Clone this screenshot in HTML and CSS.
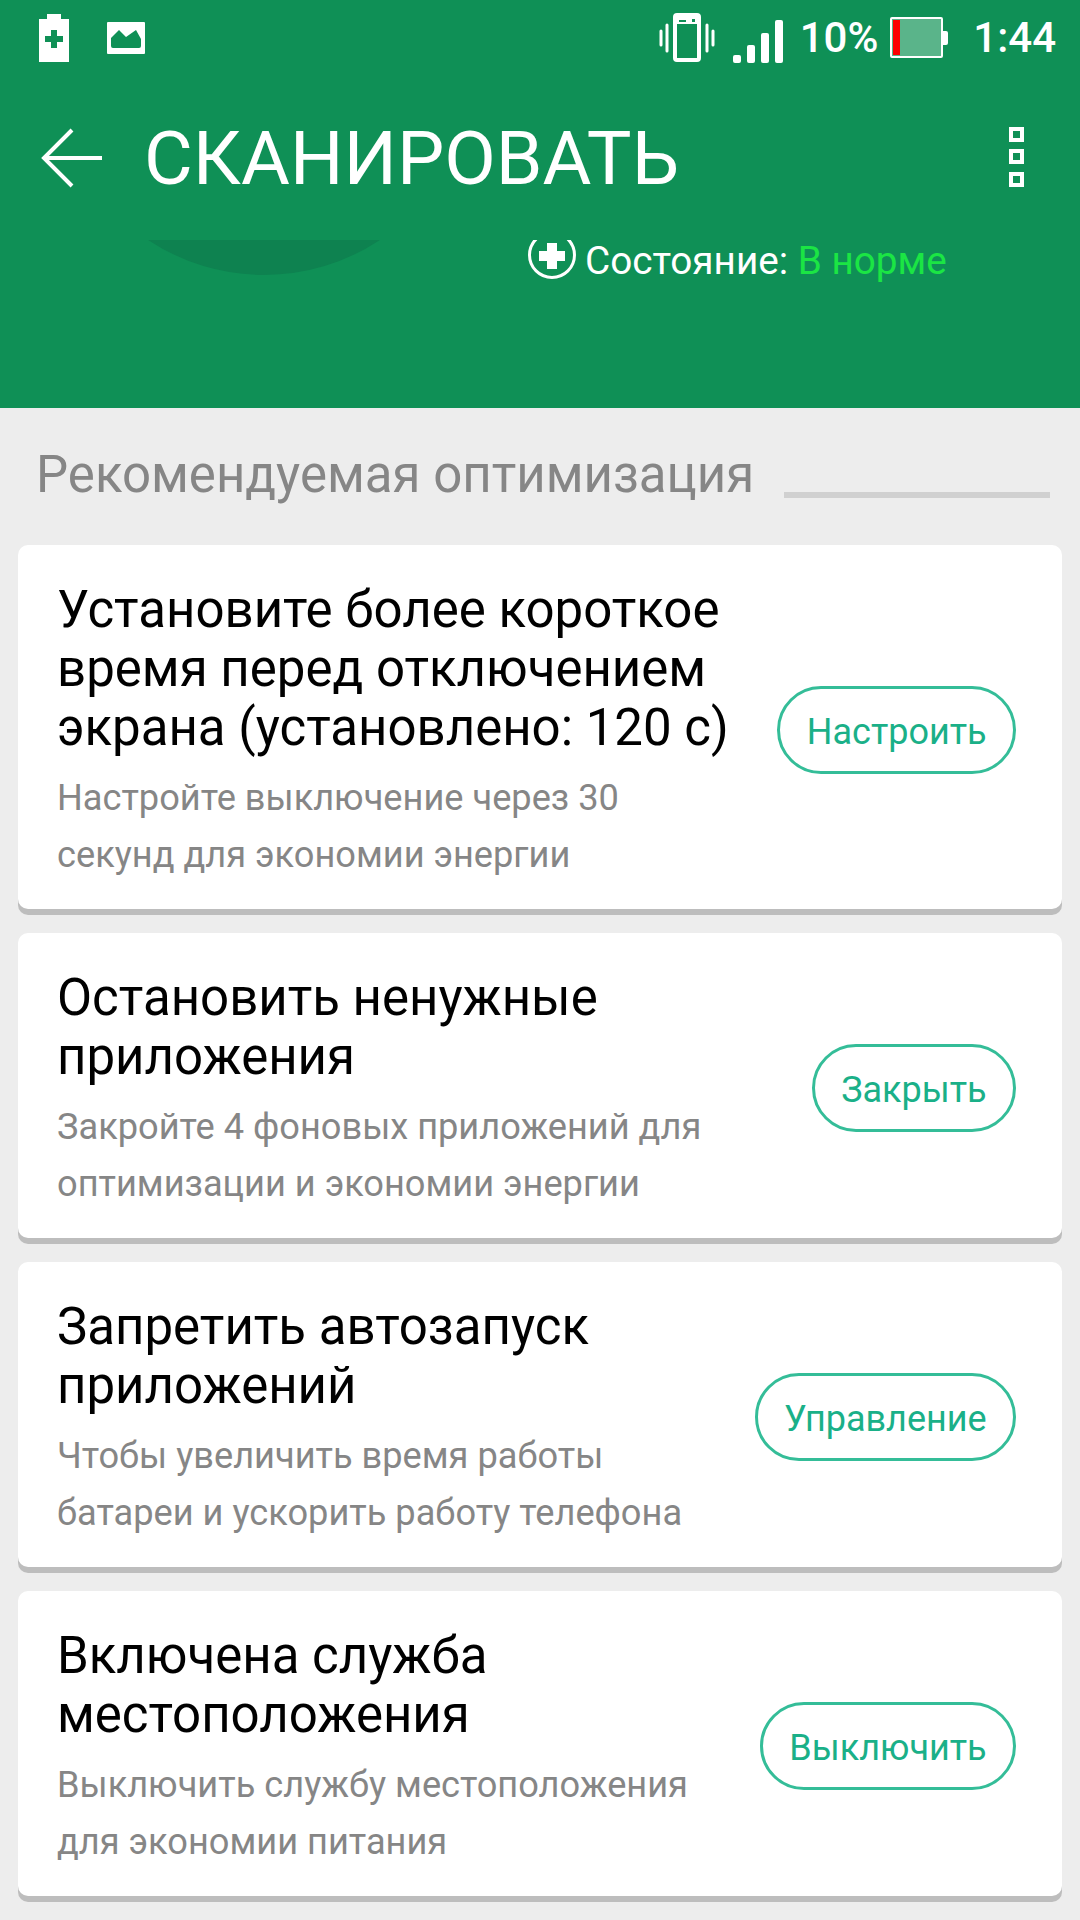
FILE: index.html
```html
<!DOCTYPE html>
<html lang="en">

<head>
    <meta charset="UTF-8">
    <meta name="viewport" content="width=device-width, initial-scale=1.0">
    <title>Сканировать</title>
    <link rel="stylesheet" href="styles.css">
</head>

<body>
    <header class="top">
        <div class="status">
            <div class="status-left">
                <svg class="ic-charge" width="30" height="48" viewBox="0 0 30 48">
                    <path fill="#fff" d="M8 0h14v5h8v43H0V5h8z" />
                    <path fill="#0f9056" d="M12 16h6v6h6v6h-6v6h-6v-6H6v-6h6z" />
                </svg>
                <svg class="ic-image" width="38" height="32" viewBox="0 0 38 32">
                    <rect width="38" height="32" rx="1" fill="#fff" />
                    <path fill="#0f9056" d="M4 16l8-8 7 7 10-7 5 9v7q0 2-2 2H6q-2 0-2-2z" />
                </svg>
            </div>
            <div class="status-right">
                <svg class="ic-vibrate" width="56" height="50" viewBox="0 0 56 50">
                    <g fill="none" stroke="#fff" stroke-width="3" stroke-linecap="round">
                        <rect x="16" y="2" width="24" height="45" rx="2" stroke-width="4" />
                        <path d="M2 18v14M8 12v26M48 12v26M54 18v14" />
                    </g>
                    <path fill="#fff" d="M18 4h20v7H18z" />
                    <path fill="#0f9056" d="M20 7h7v2h-7zM33 6h3v3h-3z" />
                </svg>
                <svg class="ic-signal" width="50" height="43" viewBox="0 0 50 43">
                    <g fill="#fff">
                        <rect x="0" y="35" width="8" height="8" rx="2" />
                        <rect x="14" y="25" width="8" height="18" rx="2" />
                        <rect x="28" y="13" width="8" height="30" rx="2" />
                        <rect x="42" y="0" width="8" height="43" rx="2" />
                    </g>
                </svg>
                <span class="pct">10%</span>
                <svg class="ic-batt" width="58" height="41" viewBox="0 0 58 41">
                    <rect x="1" y="1" width="51" height="39" rx="1" fill="#5ab48a" stroke="#fff" stroke-width="2" />
                    <rect x="3" y="3" width="7" height="35" fill="#fd0000" />
                    <path fill="#fff" d="M52 14h4q2 0 2 2v10q0 2-2 2h-4z" />
                </svg>
                <span class="time">1:44</span>
            </div>
        </div>
        <div class="toolbar">
            <svg class="ic-back" width="62" height="60" viewBox="0 0 62 60">
                <path fill="none" stroke="#fff" stroke-width="4" d="M32 2L4 30l28 28M4 30h58" />
            </svg>
            <h1 class="title">СКАНИРОВАТЬ</h1>
            <div class="menu">
                <span class="menu-dot"></span>
                <span class="menu-dot"></span>
                <span class="menu-dot"></span>
            </div>
        </div>
        <div class="hero">
            <svg class="dial" width="232" height="35" viewBox="0 0 232 35">
                <path fill="#0e8250" d="M0 0A210 210 0 0 0 232 0z" />
            </svg>
            <div class="state">
                <svg class="ic-plus" width="48" height="39" viewBox="0 9 48 39">
                    <circle cx="24" cy="24" r="22.5" fill="none" stroke="#fff" stroke-width="3" />
                    <path fill="#fff" d="M19 12h10v8h8v10h-8v8H19v-8h-8V20h8z" />
                </svg>
                <span class="state-text">Состояние: <span class="ok">В норме</span></span>
            </div>
        </div>
    </header>

    <main class="content">
        <div class="section">
            <h2 class="section-title">Рекомендуемая оптимизация</h2>
            <div class="section-line"></div>
        </div>

        <div class="card">
            <div class="card-text">
                <h3 class="card-title">Установите более короткое<br>время перед отключением<br>экрана (установлено: 120 с)</h3>
                <p class="card-sub">Настройте выключение через 30<br>секунд для экономии энергии</p>
            </div>
            <button type="button" class="btn">Настроить</button>
        </div>

        <div class="card">
            <div class="card-text">
                <h3 class="card-title">Остановить ненужные<br>приложения</h3>
                <p class="card-sub">Закройте 4 фоновых приложений для<br>оптимизации и экономии энергии</p>
            </div>
            <button type="button" class="btn">Закрыть</button>
        </div>

        <div class="card">
            <div class="card-text">
                <h3 class="card-title">Запретить автозапуск<br>приложений</h3>
                <p class="card-sub">Чтобы увеличить время работы<br>батареи и ускорить работу телефона</p>
            </div>
            <button type="button" class="btn">Управление</button>
        </div>

        <div class="card">
            <div class="card-text">
                <h3 class="card-title">Включена служба<br>местоположения</h3>
                <p class="card-sub">Выключить службу местоположения<br>для экономии питания</p>
            </div>
            <button type="button" class="btn">Выключить</button>
        </div>
    </main>
</body>

</html>
```

FILE: styles.css
```css
html,
body {
    height: 100%;
}

body {
    font-family: Roboto, "Noto Sans", sans-serif;
    margin: 0;
    padding: 0;
    background-color: #ededed;
    overflow: hidden;
}

.top {
    height: 408px;
    background-color: #0f9056;
    color: #fff;
    display: flex;
    flex-direction: column;
}

.status {
    height: 75px;
    display: flex;
    justify-content: space-between;
    align-items: center;
    padding: 0 24px 0 39px;
}

.status-left {
    display: flex;
    align-items: center;
    gap: 38px;
}

.status-right {
    display: flex;
    align-items: center;
}

.ic-vibrate {
    margin-right: 18px;
}

.ic-signal {
    margin-top: 8px;
    margin-right: 17px;
}

.pct {
    font-size: 42px;
    font-weight: 500;
    margin-right: 12px;
}

.ic-batt {
    margin-right: 25px;
}

.time {
    font-size: 42px;
    font-weight: 500;
}

.toolbar {
    height: 165px;
    display: flex;
    align-items: center;
    padding: 0 56px 0 40px;
}

.title {
    margin: 0 0 0 42px;
    font-size: 75px;
    font-weight: 400;
    flex: 1;
}

.menu {
    display: flex;
    flex-direction: column;
    gap: 7.5px;
    margin-bottom: 2px;
}

.menu-dot {
    width: 15px;
    height: 15px;
    border: 4px solid #fff;
    box-sizing: border-box;
}

.hero {
    flex: 1;
    position: relative;
}

.dial {
    position: absolute;
    left: 148px;
    top: 0;
}

.state {
    position: absolute;
    left: 528px;
    top: 0;
    display: flex;
    align-items: flex-start;
    gap: 9px;
    font-size: 38.7px;
    line-height: 36px;
}

.state-text {
    margin-top: 3px;
}

.ok {
    color: #1be544;
}

.content {
    padding: 0 18px;
}

.section {
    height: 137px;
    display: flex;
    align-items: center;
    padding: 0 12px 0 18px;
}

.section-title {
    margin: 0 0 4px;
    font-size: 51px;
    font-weight: 400;
    color: #868686;
    white-space: nowrap;
}

.section-line {
    flex: 1;
    height: 6px;
    background-color: #d0d0d0;
    margin: 36px 0 0 30px;
}

.card {
    margin-bottom: 24px;
    padding: 35px 46px 26px 39px;
    background-color: #fff;
    border-radius: 10px;
    box-shadow: 0 6px 0 #bdbdbd;
    display: flex;
    align-items: center;
    justify-content: space-between;
}

.card-title {
    margin: 0;
    font-size: 51px;
    line-height: 59px;
    font-weight: 400;
    color: #000;
    white-space: nowrap;
}

.card-sub {
    margin: 12px 0 0;
    font-size: 36.2px;
    line-height: 57px;
    color: #868686;
}

.btn {
    height: 88px;
    margin-bottom: 4px;
    padding: 4px 26.4px 0;
    background-color: #fff;
    color: #1ab088;
    border: 3px solid #34bd98;
    border-radius: 44px;
    font-family: inherit;
    font-size: 36px;
    white-space: nowrap;
}
```
